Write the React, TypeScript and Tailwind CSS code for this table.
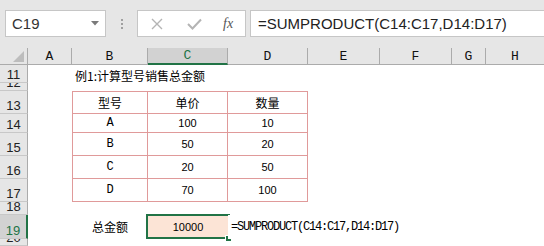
import React from "react";

const G = "#217346";

const colW = "grid-cols-[28px_44px_76px_80px_80px_72px_72px_34px_1fr]";

function RowHead({ n, sel }: { n: string; sel?: boolean }) {
  return (
    <div
      className={
        "flex items-end justify-center overflow-hidden border-b border-[#c8c8c8] pb-[1px] text-[13px] leading-none " +
        (sel
          ? "bg-[#d2d2d2] text-[#217346] border-r-2 border-r-[#217346]"
          : "bg-[#e6e6e6] text-[#222] border-r border-r-[#ababab]")
      }
      style={{ fontFamily: "'Liberation Sans', Arial, sans-serif" }}
    >
      {n}
    </div>
  );
}

const mono = { fontFamily: "'Liberation Mono', 'Courier New', monospace" };
const cjk = { fontFamily: "'Noto Sans CJK SC', 'Liberation Sans', sans-serif" };
const num = { fontFamily: "'Liberation Sans', Arial, sans-serif" };

function Empty({ n = 1 }: { n?: number }) {
  return (
    <>
      {Array.from({ length: n }).map((_, i) => (
        <div key={i} className="bg-white" />
      ))}
    </>
  );
}

function TCell({
  children,
  first,
  top,
  kind,
}: {
  children: React.ReactNode;
  first?: boolean;
  top?: boolean;
  kind: "cjk" | "mono" | "num";
}) {
  const st = kind === "cjk" ? cjk : kind === "mono" ? mono : num;
  const size = kind === "cjk" ? "text-[12px]" : kind === "mono" ? "text-[12px]" : "text-[11px]";
  return (
    <div
      className={
        "flex items-center justify-center bg-white border-r border-b border-[#e09a9a] text-black leading-none " +
        size +
        (first ? " border-l" : "") +
        (top ? " border-t" : "")
      }
      style={st}
    >
      {children}
    </div>
  );
}

export default function App() {
  const cols = ["A", "B", "C", "D", "E", "F", "G", "H"];
  const data = [
    ["A", "100", "10"],
    ["B", "50", "20"],
    ["C", "20", "50"],
    ["D", "70", "100"],
  ];
  return (
    <div className="w-[544px] h-[246px] bg-[#e6e6e6] overflow-hidden flex flex-col">
      {/* formula bar */}
      <div className="h-[48px] shrink-0 flex items-start pt-[10px]">
        <div className="ml-[5px] w-[101px] h-[27px] bg-white border border-[#c6c6c6] flex items-center justify-between pl-[6px] pr-[6px]">
          <span className="text-[15px] text-[#333] leading-none" style={num}>
            C19
          </span>
          <svg width="8" height="5" viewBox="0 0 8 5">
            <path d="M0 0 L8 0 L4 4.5 Z" fill="#7a7a7a" />
          </svg>
        </div>
        <div className="w-[31px] h-[27px] flex flex-col items-center justify-center gap-[2px]">
          <div className="w-[2px] h-[2px] bg-[#a0a0a0]" />
          <div className="w-[2px] h-[2px] bg-[#a0a0a0]" />
          <div className="w-[2px] h-[2px] bg-[#a0a0a0]" />
        </div>
        <div className="w-[109px] h-[27px] bg-white border border-[#c6c6c6] flex items-center pl-[12px]">
          <svg width="12" height="12" viewBox="0 0 12 12" className="ml-[1px]">
            <path d="M1 1 L11 11 M11 1 L1 11" stroke="#b4b4b4" strokeWidth="1.4" />
          </svg>
          <svg width="15" height="12" viewBox="0 0 15 12" className="ml-[24px]">
            <path d="M1 6 L5.5 10.5 L14 1.5" stroke="#b4b4b4" strokeWidth="2" fill="none" />
          </svg>
          <span
            className="ml-[21px] text-[14px] italic text-[#555] leading-none"
            style={{ fontFamily: "'Liberation Serif', 'Times New Roman', serif" }}
          >
            fx
          </span>
        </div>
        <div className="ml-[4px] flex-1 h-[27px] bg-white border border-[#c6c6c6] border-r-0 flex items-center pl-[7px]">
          <span className="text-[15px] text-[#222] leading-none whitespace-nowrap" style={num}>
            =SUMPRODUCT(C14:C17,D14:D17)
          </span>
        </div>
      </div>

      {/* sheet */}
      <div
        className={
          "grid " +
          colW +
          " grid-rows-[17px_18px_8px_23px_19px_23px_23px_23px_13px_24px_7px] flex-1"
        }
      >
        {/* header row */}
        <div className="bg-[#e6e6e6] border-b border-r border-[#ababab] flex items-end justify-end pr-[3px] pb-[2px]">
          <svg width="11" height="11" viewBox="0 0 11 11">
            <path d="M11 0 L11 11 L0 11 Z" fill="#bdbdbd" />
          </svg>
        </div>
        {cols.map((c) => (
          <div
            key={c}
            className={
              "flex items-center justify-center text-[13px] leading-none " +
              (c === "C"
                ? "bg-[#d2d2d2] text-[#217346] border-b-2 border-b-[#217346] border-r border-r-[#ababab]"
                : "bg-[#e6e6e6] text-[#111] border-b border-[#ababab] " + (c === "H" ? "" : "border-r"))
            }
            style={mono}
          >
            {c}
          </div>
        ))}

        {/* row 11 */}
        <RowHead n="11" />
        <Empty />
        <div className="bg-white flex items-end pl-[3px] pb-[1px] overflow-visible relative z-10">
          <span className="text-[12px] leading-none whitespace-nowrap text-black" style={cjk}>
            例1:计算型号销售总金额
          </span>
        </div>
        <Empty n={6} />

        {/* row 12 */}
        <RowHead n="12" />
        <Empty n={8} />

        {/* row 13 */}
        <RowHead n="13" />
        <Empty />
        <TCell first top kind="cjk">型号</TCell>
        <TCell top kind="cjk">单价</TCell>
        <TCell top kind="cjk">数量</TCell>
        <Empty n={4} />

        {data.map((r, i) => (
          <React.Fragment key={i}>
            <RowHead n={String(14 + i)} />
            <Empty />
            <TCell first kind="mono">{r[0]}</TCell>
            <TCell kind="num">{r[1]}</TCell>
            <TCell kind="num">{r[2]}</TCell>
            <Empty n={4} />
          </React.Fragment>
        ))}

        {/* row 18 */}
        <RowHead n="18" />
        <Empty n={8} />

        {/* row 19 */}
        <RowHead n="19" sel />
        <Empty />
        <div className="bg-white flex items-center justify-center">
          <span className="text-[12px] leading-none text-black" style={cjk}>
            总金额
          </span>
        </div>
        <div className="bg-[#fce4d6] relative flex items-center justify-center">
          <span className="text-[11px] leading-none text-black" style={num}>
            10000
          </span>
          <div className="absolute -left-[2px] -right-[2px] -top-[1px] bottom-0 border-2 border-[#217346]" />
          <div className="absolute -right-[4px] -bottom-[3px] w-[7px] h-[7px] bg-[#217346] border border-white" />
        </div>
        <div className="bg-white flex items-center pl-[3px] relative z-10">
          <span
            className="text-[12px] leading-none whitespace-nowrap text-black tracking-[-1.2px]"
            style={mono}
          >
            =SUMPRODUCT(C14:C17,D14:D17)
          </span>
        </div>
        <Empty n={4} />

        {/* row 20 */}
        <RowHead n="20" />
        <Empty n={8} />
      </div>
    </div>
  );
}
